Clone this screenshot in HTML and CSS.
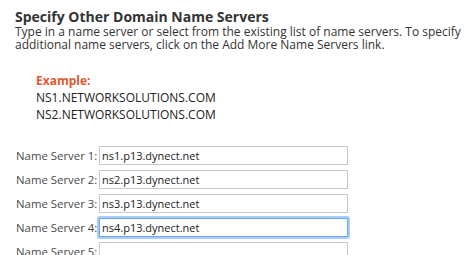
FILE: index.html
```html
<!DOCTYPE html>
<html>
<head>
<meta charset="utf-8">
<link rel="stylesheet" href="styles.css">
</head>
<body>
<div class="panel">
  <h2 class="title">Specify Other Domain Name Servers</h2>
  <p class="desc">Type in a name server or select from the existing list of name servers. To specify additional name servers, click on the Add More Name Servers link.</p>
  <div class="example">
    <div class="example-label">Example:</div>
    <div class="example-line">NS1.NETWORKSOLUTIONS.COM</div>
    <div class="example-line">NS2.NETWORKSOLUTIONS.COM</div>
  </div>
  <div class="form">
    <div class="row"><label class="lbl">Name Server 1:</label><input class="field" type="text" value="ns1.p13.dynect.net"></div>
    <div class="row"><label class="lbl">Name Server 2:</label><input class="field" type="text" value="ns2.p13.dynect.net"></div>
    <div class="row"><label class="lbl">Name Server 3:</label><input class="field" type="text" value="ns3.p13.dynect.net"></div>
    <div class="row"><label class="lbl">Name Server 4:</label><input class="field focused" type="text" value="ns4.p13.dynect.net"></div>
    <div class="row"><label class="lbl">Name Server 5:</label><input class="field" type="text" value=""></div>
  </div>
</div>
</body>
</html>
```
FILE: styles.css
```css
html, body {
  margin: 0;
  padding: 0;
  background: #fff;
  overflow: hidden;
}
body {
  font-family: "Open Sans", "DejaVu Sans", sans-serif;
  color: #333;
}
.panel {
  padding: 9px 0 0 15px;
}
.title {
  margin: 0;
  font-size: 14px;
  font-weight: 700;
  line-height: 16px;
  color: #333;
}
.desc {
  margin: 0;
  font-size: 12px;
  line-height: 13px;
  color: #333;
  width: 450px;
}
.example {
  margin: 21px 0 0 21px;
}
.example-label {
  font-size: 12px;
  font-weight: 700;
  color: #e4572e;
  line-height: 17px;
}
.example-line {
  font-size: 12px;
  line-height: 17px;
  color: #222;
}
.form {
  margin-top: 23px;
  display: flex;
  flex-direction: column;
  gap: 5px;
}
.row {
  display: flex;
  align-items: center;
  height: 19px;
}
.lbl {
  flex: none;
  white-space: nowrap;
  font-size: 11.4px;
  color: #4a4a4a;
  width: 83px;
  margin-left: 1px;
}
.field {
  flex: none;
  box-sizing: border-box;
  width: 249px;
  height: 19px;
  margin: 0;
  padding: 0 2px;
  border: 1px solid #c8c8c8;
  font-family: "Open Sans", "DejaVu Sans", sans-serif;
  font-size: 11px;
  color: #222;
  outline: none;
}
.field.focused {
  border: 1px solid #6aa5ef;
  box-shadow: 0 0 0 2px #a9cdf7;
  border-radius: 1px;
}
```
